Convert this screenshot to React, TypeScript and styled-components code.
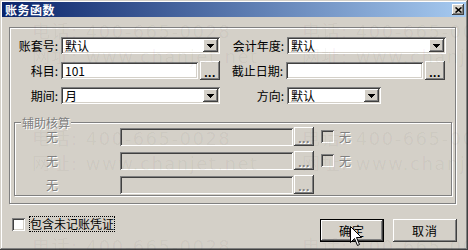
import React from 'react';
import styled, { createGlobalStyle } from 'styled-components';

const FONT = `"Noto Sans CJK SC", "Liberation Sans", sans-serif`;

const GlobalStyle = createGlobalStyle`
  html, body { margin: 0; padding: 0; background: #D4D0C8; }
  * { box-sizing: border-box; }
`;

const RAISED = `box-shadow: inset -1px -1px #404040, inset 1px 1px #FFFFFF, inset -2px -2px #808080, inset 2px 2px #D4D0C8;`;
const SUNKEN = `box-shadow: inset 1px 1px #808080, inset -1px -1px #FFFFFF, inset 2px 2px #404040, inset -2px -2px #D4D0C8;`;

const Window = styled.div`
  position: relative;
  width: 468px;
  height: 250px;
  padding: 2px;
  background: #D4D0C8;
  box-shadow: inset -1px -1px #404040, inset 1px 1px #D4D0C8, inset -2px -2px #808080, inset 2px 2px #FFFFFF;
  font-family: ${FONT};
  font-size: 12px;
  color: #000;
  overflow: hidden;
  display: flex;
  flex-direction: column;
`;

const TitleBar = styled.div`
  height: 15px;
  flex: none;
  display: flex;
  align-items: center;
  justify-content: space-between;
  padding: 0 2px 0 3px;
  background: linear-gradient(to right, #0A246A, #A6CAF0);
`;

const Title = styled.span`
  color: #FFFFFF;
  font-weight: bold;
  font-size: 12px;
  line-height: 15px;
  letter-spacing: 0.5px;
`;

const CloseButton = styled.div`
  width: 12px;
  height: 11px;
  background: #D4D0C8;
  ${RAISED}
  display: flex;
  align-items: center;
  justify-content: center;
`;

const Body = styled.div`
  flex: 1;
  display: flex;
  flex-direction: column;
  padding: 10px 10px 0 7px;
`;

const Frame = styled.div`
  width: 447px;
  height: 177px;
  flex: none;
  border: 1px solid #808080;
  box-shadow: inset 1px 1px #FFFFFF, 1px 1px #FFFFFF;
  padding-top: 8px;
  display: flex;
  flex-direction: column;
`;

const Rows = styled.div<{ $gap: number }>`
  display: flex;
  flex-direction: column;
  gap: ${p => p.$gap}px;
`;

const Row = styled.div`
  height: 19px;
  display: flex;
  align-items: center;
`;

const Label = styled.span<{ $w: number; $disabled?: boolean }>`
  width: ${p => p.$w}px;
  flex: none;
  text-align: right;
  white-space: nowrap;
  line-height: 14px;
  color: ${p => (p.$disabled ? '#808080' : '#000000')};
  text-shadow: ${p => (p.$disabled ? '1px 1px 0 #FFFFFF' : 'none')};
`;

const Field = styled.div<{ $w: number; $h?: number; $gapLeft?: number; $disabled?: boolean }>`
  width: ${p => p.$w}px;
  height: ${p => p.$h ?? 17}px;
  margin-left: ${p => p.$gapLeft ?? 3}px;
  flex: none;
  background: ${p => (p.$disabled ? '#D4D0C8' : '#FFFFFF')};
  ${SUNKEN}
  display: flex;
  align-items: center;
  justify-content: space-between;
  padding: 2px 2px 2px 4px;
  line-height: 13px;
  white-space: nowrap;
`;

const DropButton = styled.div`
  width: 15px;
  height: 13px;
  flex: none;
  background: #D4D0C8;
  ${RAISED}
  display: flex;
  align-items: center;
  justify-content: center;
  padding-top: 1px;
`;

const Ellipsis = styled.div<{ $disabled?: boolean; $gapLeft?: number }>`
  width: 20px;
  height: 19px;
  margin-left: ${p => p.$gapLeft ?? 2}px;
  flex: none;
  background: #D4D0C8;
  ${RAISED}
  display: flex;
  align-items: flex-end;
  justify-content: center;
  padding-bottom: 3px;
  font-family: "Liberation Sans", sans-serif;
  font-weight: bold;
  font-size: 12px;
  line-height: 8px;
  letter-spacing: 0.5px;
  color: ${p => (p.$disabled ? '#808080' : '#000000')};
  text-shadow: ${p => (p.$disabled ? '1px 1px 0 #FFFFFF' : 'none')};
`;

const Group = styled.div`
  position: relative;
  margin: 17px 3px 0 4px;
  border: 1px solid #808080;
  box-shadow: inset 1px 1px #FFFFFF, 1px 1px #FFFFFF;
  padding: 4px 0 1px 0;
`;

const Legend = styled.span`
  position: absolute;
  top: -7px;
  left: 6px;
  padding: 0 1px;
  background: #D4D0C8;
  line-height: 13px;
  color: #808080;
  text-shadow: 1px 1px 0 #FFFFFF;
`;

const Check = styled.div<{ $disabled?: boolean; $gapLeft?: number }>`
  width: 13px;
  height: 13px;
  flex: none;
  margin-left: ${p => p.$gapLeft ?? 0}px;
  background: ${p => (p.$disabled ? '#D4D0C8' : '#FFFFFF')};
  ${SUNKEN}
`;

const CheckText = styled.span<{ $disabled?: boolean }>`
  margin-left: 5px;
  line-height: 14px;
  color: ${p => (p.$disabled ? '#808080' : '#000000')};
  text-shadow: ${p => (p.$disabled ? '1px 1px 0 #FFFFFF' : 'none')};
`;

const BottomRow = styled.div`
  margin-top: 12px;
  margin-right: -1px;
  display: flex;
  justify-content: space-between;
  align-items: flex-start;
`;

const CheckField = styled.div`
  display: flex;
  align-items: center;
  margin-left: 3px;
`;

const FocusLabel = styled.span`
  margin-left: 4px;
  height: 16px;
  padding: 0 1px;
  outline: 1px dotted #000000;
  outline-offset: -1px;
  line-height: 16px;
  white-space: nowrap;
`;

const Buttons = styled.div`
  margin-top: 3px;
  display: flex;
  gap: 9px;
`;

const PushButton = styled.div<{ $default?: boolean }>`
  width: 64px;
  height: 23px;
  background: #D4D0C8;
  border: ${p => (p.$default ? '1px solid #000000' : 'none')};
  ${RAISED}
  display: flex;
  align-items: center;
  justify-content: center;
  line-height: 14px;
  letter-spacing: 1px;
`;

const Watermark = styled.span<{ $x: number; $y: number }>`
  position: absolute;
  left: ${p => p.$x}px;
  top: ${p => p.$y}px;
  font-family: "DejaVu Sans", "Noto Sans CJK SC", sans-serif;
  font-size: 18px;
  line-height: 18px;
  letter-spacing: 1.5px;
  white-space: nowrap;
  color: rgba(0, 0, 0, 0.045);
  pointer-events: none;
`;

const Cursor = styled.svg`
  position: absolute;
  left: 350px;
  top: 226px;
  pointer-events: none;
`;

const Arrow = () => (
  <svg width="7" height="4" viewBox="0 0 7 4" shapeRendering="crispEdges">
    <rect x="0" y="0" width="7" height="1" fill="#000" />
    <rect x="1" y="1" width="5" height="1" fill="#000" />
    <rect x="2" y="2" width="3" height="1" fill="#000" />
    <rect x="3" y="3" width="1" height="1" fill="#000" />
  </svg>
);

const Combo = ({ w, value }: { w: number; value: string }) => (
  <Field $w={w}>
    <span>{value}</span>
    <DropButton>
      <Arrow />
    </DropButton>
  </Field>
);

const marks: { x: number; y: number; t: string }[] = [];
[32, 302].forEach(x => {
  [23, 130, 238].forEach(y => marks.push({ x, y, t: '电话: 400-665-0028' }));
  [48, 155].forEach(y => marks.push({ x, y, t: '网址: www.chanjet.net' }));
});

const AuxRow = ({ check }: { check: boolean }) => (
  <Row>
    <Label $w={43} $disabled>无</Label>
    <Field $w={173} $h={18} $gapLeft={62} $disabled />
    <Ellipsis $disabled $gapLeft={1}>...</Ellipsis>
    {check && (
      <>
        <Check $disabled $gapLeft={7} />
        <CheckText $disabled>无</CheckText>
      </>
    )}
  </Row>
);

export default function App() {
  return (
    <>
      <GlobalStyle />
      <Window>
        <TitleBar>
          <Title>账务函数</Title>
          <CloseButton>
            <svg width="7" height="6" viewBox="0 0 7 6">
              <path d="M0.5 0.5L6.5 5.5M6.5 0.5L0.5 5.5" stroke="#000" strokeWidth="1.6" />
            </svg>
          </CloseButton>
        </TitleBar>
        <Body>
          <Frame>
            <Rows $gap={6}>
              <Row>
                <Label $w={48}>账套号:</Label>
                <Combo w={159} value="默认" />
                <Label $w={64}>会计年度:</Label>
                <Combo w={159} value="默认" />
              </Row>
              <Row>
                <Label $w={48}>科目:</Label>
                <Field $w={137}>101</Field>
                <Ellipsis>...</Ellipsis>
                <Label $w={63}>截止日期:</Label>
                <Field $w={137} />
                <Ellipsis>...</Ellipsis>
              </Row>
              <Row>
                <Label $w={48}>期间:</Label>
                <Combo w={159} value="月" />
                <Label $w={64}>方向:</Label>
                <Combo w={94} value="默认" />
              </Row>
            </Rows>
            <Group>
              <Legend>辅助核算</Legend>
              <Rows $gap={5}>
                <AuxRow check />
                <AuxRow check />
                <AuxRow check={false} />
              </Rows>
            </Group>
          </Frame>
          <BottomRow>
            <CheckField>
              <Check />
              <FocusLabel>包含未记账凭证</FocusLabel>
            </CheckField>
            <Buttons>
              <PushButton $default>确定</PushButton>
              <PushButton>取消</PushButton>
            </Buttons>
          </BottomRow>
        </Body>
        {marks.map((m, i) => (
          <Watermark key={i} $x={m.x} $y={m.y}>{m.t}</Watermark>
        ))}
        <Cursor width="13" height="20" viewBox="0 0 13 20">
          <path
            d="M0.5 0.5V16.5L4.5 12.5L7.5 19.5L9.5 18.5L6.5 11.5H11.5Z"
            fill="#FFFFFF"
            stroke="#000000"
            strokeWidth="1"
          />
        </Cursor>
      </Window>
    </>
  );
}
